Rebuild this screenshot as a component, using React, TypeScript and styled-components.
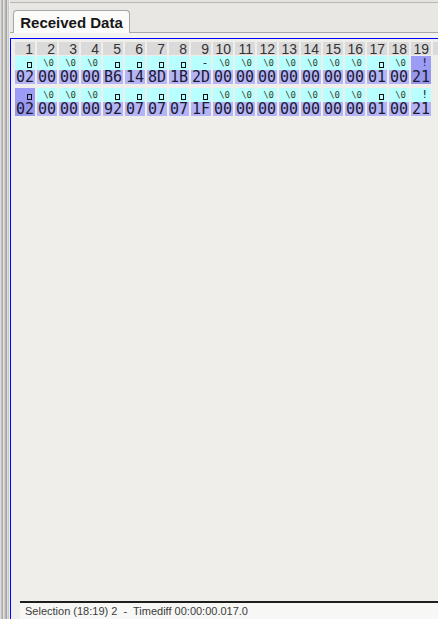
import React from 'react';
import styled, { createGlobalStyle } from 'styled-components';

const GlobalStyle = createGlobalStyle`
  html, body {
    margin: 0;
    padding: 0;
    background: #efeeeb;
    overflow: hidden;
  }
`;

const Window = styled.div`
  width: 438px;
  height: 619px;
  display: flex;
  background: #efeeeb;
  overflow: hidden;
`;

const LeftEdge = styled.div`
  width: 10px;
  flex: none;
  background: linear-gradient(
    to right,
    #dcdcdc 0 1px,
    #c2c2c2 1px 2px,
    #a9a9a9 2px 3px,
    #e2e2e2 3px 4px,
    #cfcfcf 4px 5px,
    #bab4aa 5px 6px,
    #a2a2a2 6px 7px,
    #dedede 7px 8px,
    #cacaca 8px 9px,
    #efeeeb 9px 10px
  );
`;

const Main = styled.div`
  flex: 1;
  min-width: 0;
  display: flex;
  flex-direction: column;
`;

const TopEdge = styled.div`
  height: 9px;
  flex: none;
  background: linear-gradient(
    to bottom,
    #e4e3e0 0 2px,
    #b8b8b8 2px 3px,
    #e8e7e4 3px
  );
`;

const TabBar = styled.div`
  height: 23px;
  flex: none;
  display: flex;
  align-items: flex-end;
  padding-left: 3px;
  background: #e8e7e4;
  border-bottom: 1px solid #a6a6a6;
`;

const Tab = styled.div`
  height: 23px;
  width: 117px;
  margin-bottom: -1px;
  box-sizing: border-box;
  border: 1px solid #a6a6a6;
  border-bottom: none;
  border-radius: 4px 4px 0 0;
  background: #fbfbfa;
  display: flex;
  align-items: center;
  justify-content: center;
  font-family: 'Liberation Sans', Arial, sans-serif;
  font-weight: 700;
  font-size: 15px;
  color: #161616;
`;

const PaneGap = styled.div`
  height: 5px;
  flex: none;
  background: #f3f2f0;
`;

const Pane = styled.div`
  flex: 1;
  min-height: 0;
  display: flex;
  flex-direction: column;
  border-top: 1px solid #0000ff;
  border-left: 1px solid #0000ff;
`;

const GridArea = styled.div`
  flex: 1;
  min-height: 0;
  overflow: hidden;
  padding: 3px 0 0 4px;
  display: flex;
  flex-direction: column;
`;

const Row = styled.div<{ $gap: number }>`
  display: grid;
  grid-template-columns: repeat(20, 20px);
  column-gap: 2px;
  margin-bottom: ${({ $gap }) => $gap}px;
`;

const HeadCell = styled.div`
  height: 13px;
  background: #dadada;
  font-family: 'Liberation Sans', Arial, sans-serif;
  font-size: 14px;
  line-height: 14px;
  color: #333;
  text-align: right;
  padding-right: 2px;
  white-space: nowrap;
`;

const DataCell = styled.div`
  display: flex;
  flex-direction: column;
`;

const CharPart = styled.div<{ $sel: boolean }>`
  height: 14px;
  background: ${({ $sel }) => ($sel ? '#9c9cf6' : '#b8ffff')};
  font-family: 'DejaVu Sans Mono', monospace;
  font-size: 9px;
  line-height: 9px;
  color: #3e3e26;
  display: flex;
  align-items: flex-end;
  justify-content: flex-end;
  padding: 0 3px 2px 0;
  box-sizing: border-box;
`;

const HexPart = styled.div<{ $sel: boolean }>`
  height: 14px;
  background: ${({ $sel }) => ($sel ? '#9797ec' : '#b4b4f6')};
  font-family: 'DejaVu Sans Mono', monospace;
  font-size: 15px;
  line-height: 15px;
  color: #1a1a30;
  text-align: center;
  white-space: nowrap;
`;

const Unprintable = styled.span`
  display: inline-block;
  width: 3px;
  height: 4px;
  border: 1px solid #111;
`;

const BigChar = styled.span`
  font-family: 'DejaVu Sans', sans-serif;
  font-size: 11px;
  line-height: 11px;
  color: #222;
  margin-right: 1px;
`;

const StatusBar = styled.div`
  height: 16px;
  flex: none;
  margin-left: 9px;
  border-top: 2px solid #1f1f1f;
  background: #f7f7f5;
  padding-left: 5px;
  font-family: 'Liberation Sans', Arial, sans-serif;
  font-size: 11px;
  line-height: 16px;
  color: #3c3c3c;
  white-space: pre;
`;

type Cell = { c: string; h: string };

const parse = (chars: string[], hex: string[]): Cell[] =>
  hex.map((h, i) => ({ h, c: chars[i] }));

const rows: { cells: Cell[]; sel: number }[] = [
  {
    cells: parse(
      ['b', 'z', 'z', 'z', 'b', 'b', 'b', 'b', '-', 'z', 'z', 'z', 'z', 'z', 'z', 'z', 'b', 'z', '!'],
      ['02', '00', '00', '00', 'B6', '14', '8D', '1B', '2D', '00', '00', '00', '00', '00', '00', '00', '01', '00', '21']
    ),
    sel: 18,
  },
  {
    cells: parse(
      ['b', 'z', 'z', 'z', 'b', 'b', 'b', 'b', 'b', 'z', 'z', 'z', 'z', 'z', 'z', 'z', 'b', 'z', '!'],
      ['02', '00', '00', '00', '92', '07', '07', '07', '1F', '00', '00', '00', '00', '00', '00', '00', '01', '00', '21']
    ),
    sel: 0,
  },
];

const CharGlyph: React.FC<{ c: string }> = ({ c }) => {
  if (c === 'b') return <Unprintable />;
  if (c === 'z') return <span>\0</span>;
  return <BigChar>{c}</BigChar>;
};

const App: React.FC = () => {
  return (
    <>
      <GlobalStyle />
      <Window>
        <LeftEdge />
        <Main>
          <TopEdge />
          <TabBar>
            <Tab>Received Data</Tab>
          </TabBar>
          <PaneGap />
          <Pane>
            <GridArea>
              <Row $gap={1}>
                {Array.from({ length: 20 }, (_, i) => (
                  <HeadCell key={i}>{i < 19 ? i + 1 : ''}</HeadCell>
                ))}
              </Row>
              {rows.map((row, r) => (
                <Row key={r} $gap={4}>
                  {row.cells.map((cell, i) => (
                    <DataCell key={i}>
                      <CharPart $sel={i === row.sel}>
                        <CharGlyph c={cell.c} />
                      </CharPart>
                      <HexPart $sel={i === row.sel}>{cell.h}</HexPart>
                    </DataCell>
                  ))}
                </Row>
              ))}
            </GridArea>
            <StatusBar>Selection (18:19) 2  -  Timediff 00:00:00.017.0</StatusBar>
          </Pane>
        </Main>
      </Window>
    </>
  );
};

export default App;
